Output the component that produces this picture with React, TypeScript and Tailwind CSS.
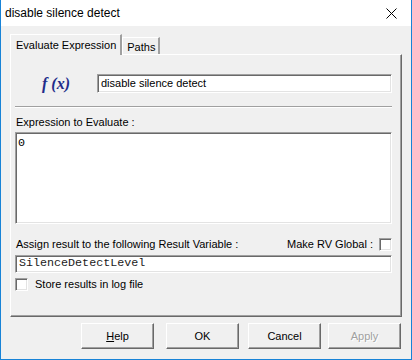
const sunken =
  "border border-t-[#a0a0a0] border-l-[#a0a0a0] border-r-white border-b-white shadow-[inset_1px_1px_0_#696969,inset_-1px_-1px_0_#e3e3e3]";

const raised =
  "border border-t-white border-l-white border-r-[#696969] border-b-[#696969] shadow-[inset_-1px_-1px_0_#a0a0a0]";

const Checkbox = () => (
  <div className={`w-[13px] h-[13px] bg-white ${sunken}`} />
);

const Button = ({
  children,
  disabled,
  className = "",
}: {
  children: React.ReactNode;
  disabled?: boolean;
  className?: string;
}) => (
  <div
    className={`w-[73px] h-[26px] flex items-center justify-center bg-[#f0f0f0] ${raised} ${className} ${
      disabled ? "text-[#a0a0a0] [text-shadow:1px_1px_0_#fff]" : "text-black"
    }`}
  >
    {children}
  </div>
);

export default function App() {
  return (
    <div className="w-[412px] h-[360px] bg-[#f0f0f0] border-x border-b border-[#1883d7] flex flex-col text-[11px] text-black font-['Liberation_Sans',Arial,sans-serif] leading-none">
      {/* title bar */}
      <div className="h-[26px] bg-white flex items-center justify-between pl-[4px] pr-[14px] shrink-0">
        <span className="text-[12px]">disable silence detect</span>
        <svg width="11" height="11" viewBox="0 0 11 11">
          <path d="M0.5 0.5 L10.5 10.5 M10.5 0.5 L0.5 10.5" stroke="#000" strokeWidth="1" />
        </svg>
      </div>

      <div className="pl-[9px] pt-[8px]">
        {/* tabs */}
        <div className="flex items-end h-[20px]">
          <div className="relative z-10 h-[21px] -mb-px pl-[5px] pr-[4px] pt-[5px] bg-[#f0f0f0] border-t border-l border-white border-r-2 border-r-[#a0a0a0]">
            Evaluate Expression
          </div>
          <div className="h-[17px] pl-[4px] pr-[3px] pt-[4px] border-t border-l border-white border-r-2 border-r-[#a0a0a0]">
            Paths
          </div>
        </div>

        {/* tab panel */}
        <div className={`w-[392px] h-[263px] pl-[4px] pr-[9px] flex flex-col ${raised}`}>
          <div className="flex items-center mt-[19px] h-[19px]">
            <span className="ml-[27px] w-[55px] text-[16px] font-bold italic text-[#222c8a] font-['Liberation_Serif',serif]">
              f (x)
            </span>
            <div className={`flex-1 h-[19px] bg-white flex items-center pl-[3px] ${sunken}`}>
              disable silence detect
            </div>
          </div>

          <div className="mt-[13px] h-[2px] border-t border-[#a0a0a0] border-b border-b-white" />

          <div className="mt-[9px] pl-[1px]">Expression to Evaluate :</div>
          <div className={`mt-[4px] h-[92px] bg-white px-[2px] pt-[5px] font-['Liberation_Mono',monospace] text-[11.7px] ${sunken}`}>
            0
          </div>

          <div className="mt-[14px] flex items-center justify-between pl-[1px]">
            <span>Assign result to the following Result Variable :</span>
            <div className="flex items-center gap-[6px]">
              <span>Make RV Global :</span>
              <Checkbox />
            </div>
          </div>
          <div className={`mt-[4px] h-[18px] bg-white flex items-center pl-[3px] font-['Liberation_Mono',monospace] text-[11.7px] text-[#1a1a1a] ${sunken}`}>
            SilenceDetectLevel
          </div>

          <div className="mt-[5px] flex items-center gap-[7px]">
            <Checkbox />
            <span>Store results in log file</span>
          </div>
        </div>
      </div>

      {/* buttons */}
      <div className="flex mt-[6px] pl-[80px]">
        <Button>
          <span>
            <span className="underline">H</span>elp
          </span>
        </Button>
        <Button className="ml-[12px]">OK</Button>
        <Button className="ml-[9px]">Cancel</Button>
        <Button className="ml-[7px]" disabled>
          Apply
        </Button>
      </div>
    </div>
  );
}
